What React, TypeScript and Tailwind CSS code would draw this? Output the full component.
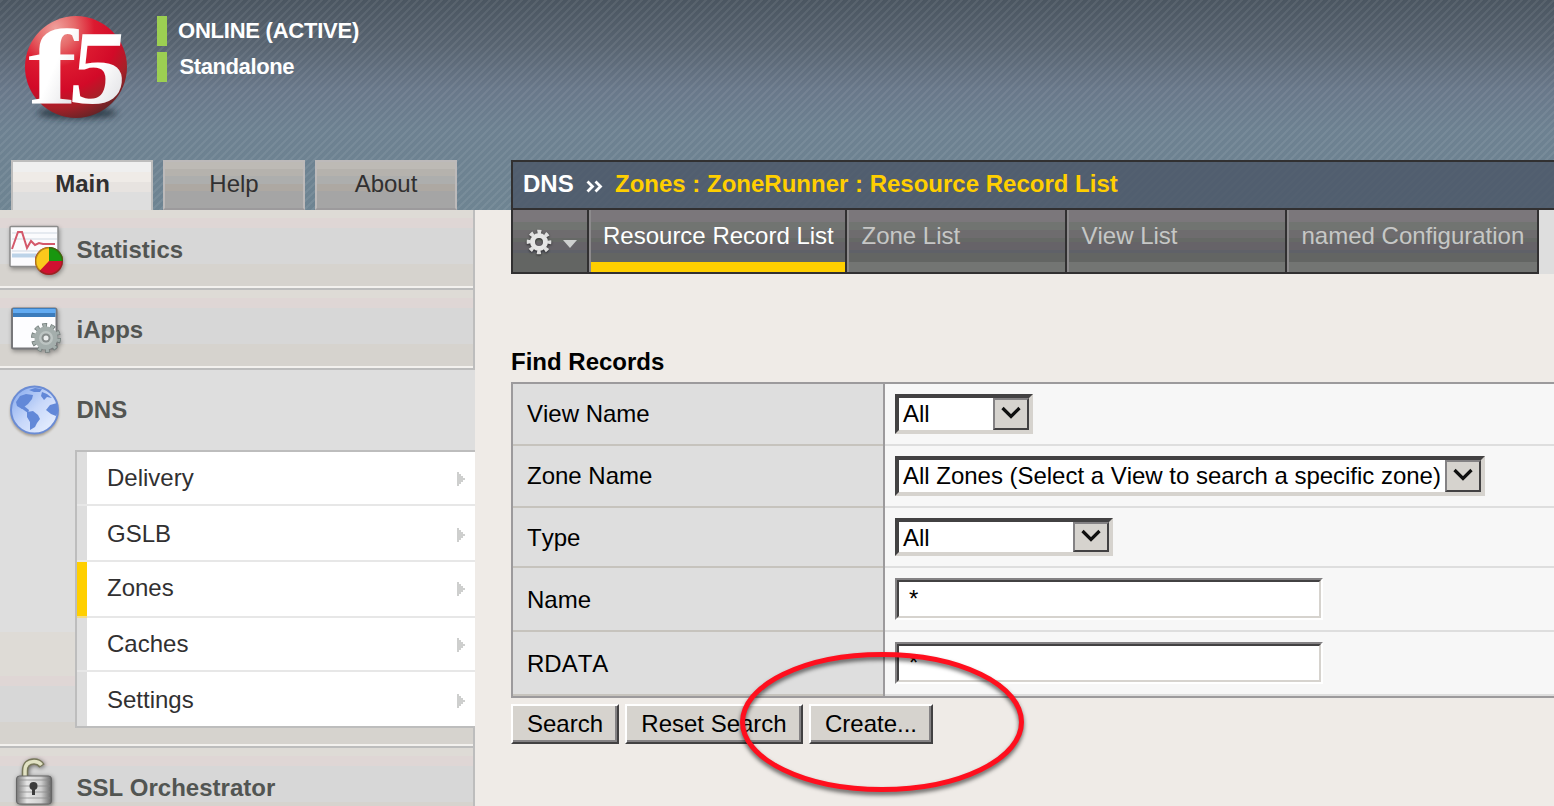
import React from "react";

const BAND =
  "bg-[linear-gradient(to_bottom,#dedbd6_0_8px,#dfd6d5_8px_18px,#d7d7d7_18px_54px,#d6d3ce_54px_76px,#f3f1ee_76px_78px,#bdbdbd_78px_80px)]";

function Logo() {
  return (
    <svg width="116" height="140" viewBox="0 0 116 140" className="block overflow-visible">
      <defs>
        <radialGradient id="ball" cx="0.3" cy="0.12" r="0.95">
          <stop offset="0" stopColor="#f0a09c" />
          <stop offset="0.2" stopColor="#e66a6a" />
          <stop offset="0.4" stopColor="#dc1a30" />
          <stop offset="0.65" stopColor="#d20a28" />
          <stop offset="0.82" stopColor="#a82028" />
          <stop offset="1" stopColor="#5c2426" />
        </radialGradient>
        <linearGradient id="glyph" x1="0" y1="0" x2="1" y2="1">
          <stop offset="0.5" stopColor="#ffffff" />
          <stop offset="1" stopColor="#d8d8dc" />
        </linearGradient>
        <filter id="soft" x="-20%" y="-60%" width="140%" height="220%">
          <feGaussianBlur stdDeviation="3" />
        </filter>
      </defs>
      <ellipse cx="57" cy="103" rx="40" ry="6" fill="#1e2a34" opacity="0.75" filter="url(#soft)" />
      <circle cx="56" cy="57" r="51" fill="url(#ball)" />
      <g fill="url(#glyph)" fontWeight="700" className="font-['Liberation_Serif',serif]">
        <text transform="translate(8 93) scale(1.4 1)" fontSize="106">f</text>
        <text transform="translate(47 93) skewX(-6) scale(1.08 1)" fontSize="105">5</text>
      </g>
    </svg>
  );
}

function StatsIcon() {
  return (
    <svg width="60" height="60" viewBox="0 0 60 60" className="block drop-shadow-[1px_2px_2px_rgba(0,0,0,0.35)]">
      <rect x="6" y="7.500" width="48" height="40" rx="1" fill="#fbfbfd" stroke="#8c8c8c" strokeWidth="1.5" />
      <path d="M8 14H53M8 20H53M8 32H40" stroke="#e6eaf0" strokeWidth="2" />
      <path d="M8 36.500H38" stroke="#bcd3e8" strokeWidth="4" />
      <path d="M8 30L14 13H18L23 29L27 22L31 26L35 24L39 25H51" fill="none" stroke="#d4586a" strokeWidth="2" />
      <circle cx="45" cy="42" r="14" fill="#d01030" />
      <path d="M45 42V28A14 14 0 0 1 59 42Z" fill="#18960f" />
      <path d="M45 42V28A14 14 0 0 0 35.500 52Z" fill="#fbc81c" />
      <circle cx="45" cy="42" r="13.300" fill="none" stroke="#5a3a10" strokeOpacity="0.45" strokeWidth="1.500" />
    </svg>
  );
}

function AppsIcon() {
  return (
    <svg width="60" height="60" viewBox="0 0 60 60" className="block drop-shadow-[1px_2px_2px_rgba(0,0,0,0.35)]">
      <rect x="8" y="9.500" width="44.500" height="40" rx="1.500" fill="#fdfdff" stroke="#77777a" strokeWidth="2" />
      <rect x="9" y="9" width="42.500" height="9" fill="#3c7cbc" />
      <rect x="9" y="10" width="42.500" height="4" fill="#62abf2" />
      <circle cx="42" cy="39" r="12.500" fill="none" stroke="#76807e" strokeWidth="5" strokeDasharray="4.600 3.254" />
      <circle cx="42" cy="39" r="11.500" fill="#a4aeac" />
      <circle cx="42" cy="39" r="12.500" fill="none" stroke="#a4aeac" strokeWidth="3.400" strokeDasharray="3 4.854" strokeDashoffset="-0.800" />
      <circle cx="42" cy="39" r="7" fill="#bcc4c2" />
      <circle cx="42" cy="39" r="4.500" fill="#868c8b" />
      <circle cx="42" cy="39" r="2.500" fill="#eceeee" />
    </svg>
  );
}

function GlobeIcon() {
  return (
    <svg width="60" height="60" viewBox="0 0 60 60" className="block drop-shadow-[0_2px_1px_rgba(90,70,40,0.4)]">
      <defs>
        <linearGradient id="sea" x1="0" y1="0" x2="1" y2="1">
          <stop offset="0" stopColor="#7ea4ec" />
          <stop offset="0.5" stopColor="#c8d8fa" />
          <stop offset="1" stopColor="#eef4ff" />
        </linearGradient>
      </defs>
      <circle cx="30.500" cy="31" r="23.500" fill="url(#sea)" stroke="#6b8cd4" strokeWidth="2" />
      <g fill="#6288d8">
        <path d="M12 23L16 17L22 15L29 16L28 20L24 25L20 28L18 30L13 27Z" />
        <path d="M25 11L31 9L38 10L36 13L30 13Z" />
        <path d="M38 13L43 15L48 19L43 18L40 21L37 17Z" />
        <path d="M23 33L29 32L34 36L36 40L33 44L31 48L26 51L26 43L23 38Z" />
        <path d="M42 31L46 26L53 24L54 33L52 37L47 35Z" />
        <path d="M20 27L25 31L24 34L17 29Z" />
      </g>
    </svg>
  );
}

function LockIcon() {
  return (
    <svg width="60" height="60" viewBox="0 0 60 60" className="-mt-[10px] -ml-1 block drop-shadow-[1px_1px_2px_rgba(0,0,0,0.5)]">
      <defs>
        <linearGradient id="lock" x1="0" y1="0" x2="1" y2="0">
          <stop offset="0" stopColor="#777" />
          <stop offset="0.3" stopColor="#e6e6e6" />
          <stop offset="0.7" stopColor="#d0d0d0" />
          <stop offset="1" stopColor="#666" />
        </linearGradient>
      </defs>
      <path d="M25 31V24C25 17 29 14.500 34 14.500C38 14.500 40 16 42 19" fill="none" stroke="#77775a" strokeWidth="6.500" />
      <path d="M25 31V24C25 17 29 14.500 34 14.500C38 14.500 40 16 41.500 18" fill="none" stroke="#e2e2c4" strokeWidth="3.500" />
      <rect x="16.500" y="29" width="35" height="28" rx="3" fill="url(#lock)" stroke="#666" />
      <path d="M18 33H50M18 39H50M18 45H50M18 51H50" stroke="#8a8a8a" strokeOpacity="0.5" strokeWidth="1.500" />
      <circle cx="33.500" cy="39" r="4" fill="#3c3c3c" />
      <path d="M33.500 38V48" stroke="#3c3c3c" strokeWidth="3" />
    </svg>
  );
}

function GearIcon() {
  return (
    <svg width="28" height="28" viewBox="0 0 28 28" className="block drop-shadow-[0_1px_1px_rgba(0,0,0,0.6)]">
      <circle cx="14" cy="14" r="10.300" fill="none" stroke="#e0e0e0" strokeWidth="4" strokeDasharray="3.900 4.190" strokeDashoffset="1.950" />
      <circle cx="14" cy="14" r="6.500" fill="none" stroke="#e6e6e6" strokeWidth="5" />
    </svg>
  );
}

function Tab({ label, active }: { label: string; active?: boolean }) {
  return (
    <div
      className={
        active
          ? "h-[50px] w-[142px] border-2 border-b-0 border-[#bdbdbd] bg-[linear-gradient(to_bottom,#efefef_0_10px,#efebe7_10px_20px,#e7e3e0_20px_30px,#dedede_30px)] pt-[10px] pl-[1px] text-center font-bold"
          : "h-[50px] w-[142px] border-2 border-[#bdbaba] border-b-[#9c9a9c] bg-[linear-gradient(to_bottom,#bdbab5_0_7px,#b5b2ad_7px_14px,#adaead_14px_22px,#ada8a2_22px_29px,#a5a5a5_29px)] pt-[10px] text-center"
      }
    >
      {label}
    </div>
  );
}

function NavRow({ icon, label, className }: { icon: React.ReactNode; label: string; className: string }) {
  return (
    <div className={"flex h-[80px] shrink-0 overflow-hidden " + className}>
      <div className="w-[76px] shrink-0 pt-[9px] pl-[4px]">{icon}</div>
      <div className="pt-[28px] pl-[0.5px] font-bold text-[#525552]">{label}</div>
    </div>
  );
}

const subItems = [
  { label: "Delivery", size: "h-[54px] pt-[14px]" },
  { label: "GSLB", size: "h-[56px] pt-[16px]" },
  { label: "Zones", size: "h-[56px] pt-[14px]", active: true },
  { label: "Caches", size: "h-[54px] pt-[14px]" },
  { label: "Settings", size: "h-[54px] pt-[16px]", last: true },
];

function SubMenu() {
  return (
    <div className="ml-[75px] flex h-[278px] flex-col border-y-2 border-l-2 border-[#bdbdbd] bg-white">
      {subItems.map((it) => (
        <div key={it.label} className="flex">
          <div className={"w-[10px] border-b-2 " + (it.active ? "border-[#f3dc85] bg-[#ffcf00]" : it.last ? "border-[#dedede] bg-[#dedede]" : "border-[#e7e7e7] bg-[#dedede]")} />
          <div
            className={
              "flex grow justify-between pr-[10px] pl-[20px] text-[#313031] " +
              it.size +
              (it.last ? "" : " border-b-2 border-[#e7e7e7]")
            }
          >
            <span>{it.label}</span>
            <svg width="8" height="14" viewBox="0 0 8 14" className="mt-[6px]">
              <path d="M0 0H2V2H4V4H6V6H8V8H6V10H4V12H2V14H0Z" fill="#cecfce" />
            </svg>
          </div>
        </div>
      ))}
    </div>
  );
}

function MenuTab({ label, width, active }: { label: string; width: string; active?: boolean }) {
  return (
    <div
      className={
        "h-[62px] border-r-2 border-l-2 border-r-[#313031] border-l-[#8c8a8c] pt-[14px] whitespace-nowrap " +
        width +
        (active
          ? " pl-[12px] bg-[linear-gradient(to_bottom,#7b777b_0_12px,#717471_12px_20px,#6e6c6e_20px_28px,#666966_28px_32px,#666368_32px_40px,#5f6168_40px_43px,#636563_43px_52px,#ffcf00_52px)] text-white"
          : " pl-[12.5px] bg-[linear-gradient(to_bottom,#7b777b_0_12px,#717471_12px_20px,#6e6c6e_20px_28px,#666966_28px_32px,#666368_32px_40px,#5f6168_40px_43px,#636563_43px_52px,#737573_52px)] text-[#c6c7c6]")
      }
    >
      {label}
    </div>
  );
}

function Select({ text, size }: { text: string; size: string }) {
  return (
    <div className={"flex border-4 border-t-[#424142] border-r-[#d6d3ce] border-b-[#d6d3ce] border-l-[#424142] bg-white " + size}>
      <span className="grow pt-[4px] pl-[4px] tracking-[-0.02px] whitespace-nowrap">{text}</span>
      <span className="flex w-[36px] shrink-0 items-center justify-center border-2 border-t-[#848284] border-r-[#424142] border-b-[#424142] border-l-[#848284] bg-[#d6d3ce]">
        <svg width="20" height="14" viewBox="0 0 20 14" className="mr-[1px] mb-[3px]">
          <path d="M1.500 2L10 10.500L18.500 2" fill="none" stroke="#101010" strokeWidth="3.200" />
        </svg>
      </span>
    </div>
  );
}

function TextInput() {
  return (
    <div className="h-[42px] w-[428px] border-2 border-t-[#848284] border-r-white border-b-white border-l-[#848284]">
      <div className="h-full border-2 border-t-[#424142] border-r-[#d6d3ce] border-b-[#d6d3ce] border-l-[#424142] bg-white pt-[5px] pl-[10px]">*</div>
    </div>
  );
}

function Field({ label, height, pad, children }: { label: string; height: string; pad: string; children: React.ReactNode }) {
  return (
    <div className={"flex " + height}>
      <div className={"w-[370px] shrink-0 border-b-2 border-[#c6c3bd] bg-[#dedede] pl-[14px] " + pad}>{label}</div>
      <div className="w-[2px] shrink-0 bg-[#9c9a9c]" />
      <div className="grow border-b-2 border-[#dedede] bg-[#f7f7f7] pt-[10px] pl-[10px]">{children}</div>
    </div>
  );
}

function Button({ label, width }: { label: string; width: string }) {
  return (
    <button className={"block h-[40px] border-2 border-t-white border-r-[#424142] border-b-[#424142] border-l-white " + width}>
      <span className="block h-full border-r-2 border-b-2 border-[#848284] bg-[#d6d3ce] pt-[6px] pl-[2px] text-center">{label}</span>
    </button>
  );
}

export default function App() {
  return (
    <div className="relative flex h-[806px] w-[1554px] flex-col overflow-hidden bg-[#efebe7] font-['Liberation_Sans',Arial,sans-serif] text-[24px] leading-[24px] text-black [font-kerning:none]">
      <header className="flex h-[210px] shrink-0 bg-[repeating-linear-gradient(135deg,rgba(255,255,255,0.07)_0_2.4px,transparent_2.4px_5.657px),linear-gradient(to_bottom,#4b5661_0,#586471_45px,#69788a_90px,#6d8191_130px,#6e8492_210px)]">
        <div className="flex w-[511px] shrink-0 flex-col">
          <div className="flex h-[160px] pl-5">
            <div className="w-[137px] pt-[10px]">
              <Logo />
            </div>
            <div className="flex flex-col gap-[6px] pt-4 text-[22px] font-bold text-white">
              <div className="flex h-[30px]">
                <div className="w-[10px] bg-[#9ccf52]" />
                <div className="pt-[3px] pl-[11px] tracking-[-0.23px]">ONLINE (ACTIVE)</div>
              </div>
              <div className="flex h-[30px]">
                <div className="w-[10px] bg-[#9ccf52]" />
                <div className="pt-[3px] pl-[12.5px] tracking-[-0.4px]">Standalone</div>
              </div>
            </div>
          </div>
          <div className="flex gap-[10px] pl-[11px] text-[#313031]">
            <Tab label="Main" active />
            <Tab label="Help" />
            <Tab label="About" />
          </div>
        </div>
        <div className="flex grow flex-col justify-end">
          <div className="flex h-[50px] border-2 border-r-0 border-[#313031] bg-[#4c5868]/85 pt-[10px] pl-[10px] font-bold whitespace-nowrap text-white">
            <span className="w-[63px]">DNS</span>
            <svg width="18" height="14" viewBox="0 0 18 14" className="mt-[8px] mr-[11px]">
              <path d="M1.500 1.500L6.500 6.500L1.500 11.500M9.500 1.500L14.500 6.500L9.500 11.500" fill="none" stroke="#fff" strokeWidth="2.800" />
            </svg>
            <span className="text-[#ffcf00]">Zones : ZoneRunner : Resource Record List</span>
          </div>
        </div>
      </header>
      <div className="flex h-[596px]">
        <nav className="flex w-[475px] shrink-0 flex-col overflow-hidden">
          <NavRow icon={<StatsIcon />} label="Statistics" className={"border-r-2 border-[#bdbdbd] " + BAND} />
          <NavRow icon={<AppsIcon />} label="iApps" className={"border-r-2 border-[#bdbdbd] " + BAND} />
          <div className="h-[378px] shrink-0 bg-[linear-gradient(to_bottom,#dedede_0_262px,#dedbd6_262px_306px,#dfd6d5_306px_316px,#d7d7d7_316px_352px,#d6d3ce_352px_374px,#f3f1ee_374px_376px,#bdbdbd_376px_378px)]">
            <NavRow icon={<GlobeIcon />} label="DNS" className="" />
            <SubMenu />
            <div className="ml-auto h-[20px] w-[2px] bg-[#bdbdbd]" />
          </div>
          <NavRow icon={<LockIcon />} label="SSL Orchestrator" className={"border-r-2 border-[#bdbdbd] " + BAND} />
        </nav>
        <main className="ml-[36px] flex grow flex-col">
          <div className="flex h-[64px] shrink-0">
            <div className="flex border-b-2 border-l-2 border-[#313031]">
              <div className="flex w-[76px] border-r-2 border-[#313031] bg-[linear-gradient(to_bottom,#7b777b_0_12px,#717471_12px_20px,#6e6c6e_20px_28px,#666966_28px_32px,#666368_32px_40px,#5f6168_40px_43px,#636563_43px)] pt-[18px] pl-3">
                <GearIcon />
                <svg width="14" height="8" viewBox="0 0 14 8" className="mt-[12px] ml-[10px]">
                  <path d="M0 0H14L7 8Z" fill="#cecfce" />
                </svg>
              </div>
              <MenuTab label="Resource Record List" width="w-[258px]" active />
              <MenuTab label="Zone List" width="w-[220px]" />
              <MenuTab label="View List" width="w-[220px]" />
              <MenuTab label="named Configuration" width="w-[252px]" />
            </div>
            <div className="grow bg-[#dedede]" />
          </div>
          <h2 className="mt-[76px] h-[32px] font-bold">Find Records</h2>
          <section className="h-[316px] border-y-2 border-l-2 border-[#9c9a9c]">
            <Field label="View Name" height="h-[62px]" pad="pt-[18px]">
              <Select text="All" size="h-[40px] w-[138px]" />
            </Field>
            <Field label="Zone Name" height="h-[62px]" pad="pt-[18px]">
              <Select text="All Zones (Select a View to search a specific zone)" size="h-[40px] w-[590px]" />
            </Field>
            <Field label="Type" height="h-[60px]" pad="pt-[18px]">
              <Select text="All" size="h-[38px] w-[218px]" />
            </Field>
            <Field label="Name" height="h-[64px]" pad="pt-[20px]">
              <TextInput />
            </Field>
            <Field label="RDATA" height="h-[64px]" pad="pt-[20px]">
              <TextInput />
            </Field>
          </section>
          <div className="mt-[6px] flex gap-[6px]">
            <Button label="Search" width="w-[108px]" />
            <Button label="Reset Search" width="w-[178px]" />
            <Button label="Create..." width="w-[124px]" />
          </div>
        </main>
      </div>
      <svg width="300" height="160" viewBox="0 0 300 160" className="absolute top-[642px] left-[732px] drop-shadow-[0_3px_2px_rgba(0,0,0,0.6)]">
        <ellipse cx="150" cy="80" rx="139.500" ry="67.500" fill="none" stroke="#ff0f1e" strokeWidth="5" />
      </svg>
    </div>
  );
}
